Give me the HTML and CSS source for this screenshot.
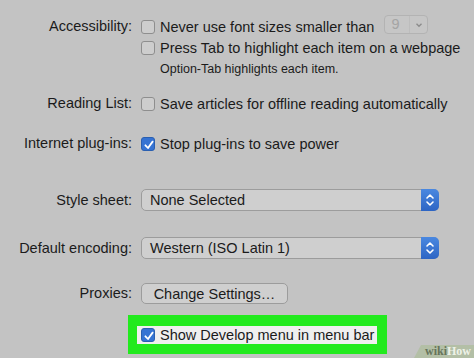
FILE: index.html
```html
<!DOCTYPE html>
<html lang="en">
  <head>
    <meta charset="UTF-8" />
    <meta name="viewport" content="width=device-width, initial-scale=1.0" />
    <title>Advanced</title>
    <link rel="stylesheet" href="styles.css">
  </head>
  <body>
    <div class="pane">
      <div class="row row--access">
        <span class="row__label">Accessibility:</span>
        <div class="row__controls">
          <div class="option">
            <span class="check"></span>
            <span>Never use font sizes smaller than</span>
            <span class="mini-popup">
              <span class="mini-popup__value">9</span>
              <span class="mini-popup__arrow">
                <svg viewBox="0 0 10 10" class="mini-popup__icon">
                  <path d="M2.5 3.8 L5 6.2 L7.5 3.8" />
                </svg>
              </span>
            </span>
          </div>
          <div class="option">
            <span class="check"></span>
            <span>Press Tab to highlight each item on a webpage</span>
          </div>
          <div class="option option--note">Option-Tab highlights each item.</div>
        </div>
      </div>

      <div class="row row--reading">
        <span class="row__label">Reading List:</span>
        <div class="option">
          <span class="check"></span>
          <span>Save articles for offline reading automatically</span>
        </div>
      </div>

      <div class="row row--plugins">
        <span class="row__label">Internet plug-ins:</span>
        <div class="option">
          <span class="check check--on">
            <svg viewBox="0 0 14 14" class="check__icon"><path d="M3.4 7.3 L6 10 L10.6 3.6" /></svg>
          </span>
          <span>Stop plug-ins to save power</span>
        </div>
      </div>

      <div class="row row--style">
        <span class="row__label">Style sheet:</span>
        <div class="popup">
          <span class="popup__value">None Selected</span>
          <span class="popup__stepper">
            <svg viewBox="0 0 17 22" class="popup__icon">
              <path d="M5.5 9 L8.5 6 L11.5 9" />
              <path d="M5.5 13 L8.5 16 L11.5 13" />
            </svg>
          </span>
        </div>
      </div>

      <div class="row row--encoding">
        <span class="row__label">Default encoding:</span>
        <div class="popup">
          <span class="popup__value">Western (ISO Latin 1)</span>
          <span class="popup__stepper">
            <svg viewBox="0 0 17 22" class="popup__icon">
              <path d="M5.5 9 L8.5 6 L11.5 9" />
              <path d="M5.5 13 L8.5 16 L11.5 13" />
            </svg>
          </span>
        </div>
      </div>

      <div class="row row--proxies">
        <span class="row__label">Proxies:</span>
        <div class="controls-line">
          <button class="push">Change Settings…</button>
        </div>
      </div>

      <div class="develop">
        <div class="develop__highlight">
          <div class="develop__inner">
            <span class="check check--on">
              <svg viewBox="0 0 14 14" class="check__icon"><path d="M3.4 7.3 L6 10 L10.6 3.6" /></svg>
            </span>
            <span>Show Develop menu in menu bar</span>
          </div>
        </div>
      </div>
    </div>

    <div class="watermark"><span class="watermark__wiki">wiki</span><span class="watermark__how">How</span></div>
  </body>
</html>
```

FILE: styles.css
```css
* {
  margin: 0;
  padding: 0;
  box-sizing: border-box;
}
html,
body {
  height: 100%;
}
body {
  background-color: #c3c3c3;
  color: #1b1b1b;
  font-family: "Liberation Sans", Arial, sans-serif;
  font-size: 14.5px;
  overflow: hidden;
  position: relative;
}
.pane {
  padding-top: 16px;
}
.row {
  display: grid;
  grid-template-columns: 132px 1fr;
  column-gap: 9px;
  align-items: center;
}
.row--access {
  align-items: start;
}
.row__label {
  text-align: right;
  line-height: 21px;
  white-space: nowrap;
}
.row--reading {
  margin-top: 14px;
}
.row--plugins {
  margin-top: 19px;
}
.row--style {
  margin-top: 35px;
}
.row--encoding {
  margin-top: 26px;
}
.row--proxies {
  margin-top: 24px;
}
.option {
  display: flex;
  align-items: center;
  height: 21px;
  white-space: nowrap;
}
.option--note {
  font-size: 12.5px;
  padding-left: 19px;
}
.check {
  flex: none;
  display: grid;
  place-items: center;
  width: 14px;
  height: 14px;
  margin-right: 5px;
  border: 1px solid #8e8e8e;
  border-radius: 3px;
  background-color: #cdcdcd;
}
.check--on {
  border-color: #2a5fb0;
  background-color: #3573d3;
}
.check__icon {
  width: 14px;
  height: 14px;
  fill: none;
  stroke: #fff;
  stroke-width: 1.8;
  stroke-linecap: round;
  stroke-linejoin: round;
}
.mini-popup {
  display: flex;
  align-self: flex-start;
  margin-top: -1px;
  margin-left: 10px;
  width: 44px;
  height: 19px;
  border: 1px solid #b3b3b3;
  border-radius: 4px;
  background-color: #c6c6c6;
}
.mini-popup__value {
  width: 25px;
  padding-left: 6px;
  line-height: 17px;
  color: #a4a4a4;
  border-right: 1px solid #bdbdbd;
}
.mini-popup__arrow {
  flex: 1;
  display: grid;
  place-items: center;
}
.mini-popup__icon {
  width: 10px;
  height: 10px;
  fill: none;
  stroke: #8c8c8c;
  stroke-width: 1.4;
}
.popup {
  display: flex;
  align-items: center;
  width: 298px;
  height: 22px;
  border: 1px solid #9c9c9c;
  border-radius: 5px;
  background-color: #cfcfcf;
  white-space: nowrap;
}
.popup__value {
  flex: 1;
  padding-left: 8px;
}
.popup__stepper {
  align-self: stretch;
  width: 18px;
  margin: -1px -1px -1px 0;
  border-radius: 0 5px 5px 0;
  background: linear-gradient(#4a88e0, #2d65c4);
}
.popup__icon {
  width: 18px;
  height: 22px;
  fill: none;
  stroke: #fff;
  stroke-width: 1.6;
  stroke-linecap: round;
  stroke-linejoin: round;
}
.controls-line {
  display: flex;
}
.push {
  width: 147px;
  height: 21px;
  border: 1px solid #9c9c9c;
  border-radius: 5px;
  background-color: #cfcfcf;
  color: #1b1b1b;
  font-family: inherit;
  font-size: 14.5px;
}
.develop {
  display: flex;
  margin-top: 11px;
  padding-left: 128px;
}
.develop__highlight {
  padding: 11px 10px 10px 9px;
  background-color: #22ea1e;
}
.develop__inner {
  display: flex;
  align-items: center;
  height: 18px;
  padding: 0 3px 0 4px;
  background-color: #efefef;
  white-space: nowrap;
}
.watermark {
  position: absolute;
  right: 0;
  bottom: 0;
  width: 60px;
  height: 13px;
  padding-left: 11px;
  background-color: #b3bfa6;
  clip-path: polygon(7px 0, 100% 0, 100% 100%, 0 100%);
  font-family: "Liberation Serif", serif;
  font-weight: bold;
  font-size: 12px;
  line-height: 13px;
}
.watermark__wiki {
  color: #66745a;
}
.watermark__how {
  color: #eef2e8;
}
```
